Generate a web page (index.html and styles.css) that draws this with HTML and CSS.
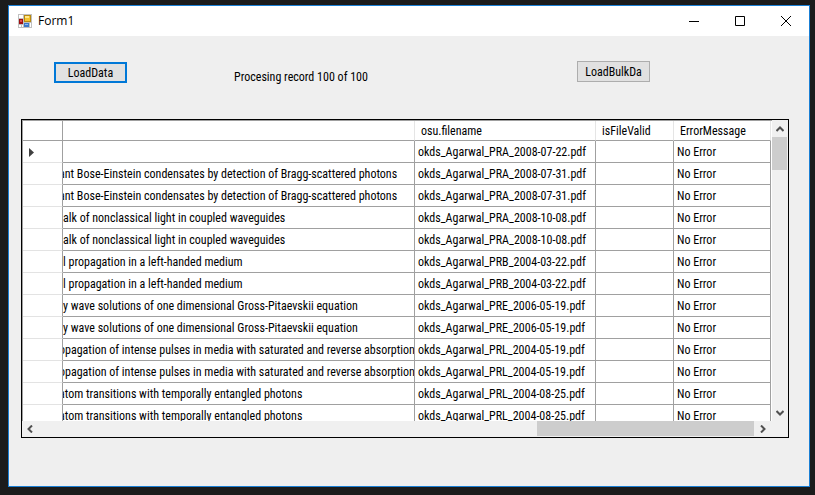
FILE: index.html
```
<!DOCTYPE html>
<html lang="en">
<head>
<meta charset="utf-8">
<title>Form1</title>
<link rel="stylesheet" href="styles.css">
</head>
<body>
<main class="window">
  <header class="titlebar">
    <svg class="app-icon" width="14" height="14" viewBox="0 0 14 14" shape-rendering="crispEdges" aria-hidden="true">
      <path fill="#c0c0c0" d="M0 0h14v14H0z"/>
      <path fill="#fff" d="M1 1h4v3H1zM1 11h2v2H1zM4 11h1v2H4zM12 9h1v4h-1zM1 5h4v5H1z"/>
      <path fill="#a01010" d="M1 5h4v5H1z"/><path fill="#e04848" d="M2 6h2v2H2z"/>
      <path fill="#b88a10" d="M6 1h7v7H6z"/><path fill="#f4c430" d="M7 2h5v5H7z"/><path fill="#ffe88a" d="M7 2h4v2H7z"/>
      <path fill="#3c78c8" d="M6 9h5v4H6z"/><path fill="#8cb8f0" d="M7 10h3v1H7z"/>
    </svg>
    <h1 class="title">Form1</h1>
    <div class="controls">
      <button class="control" aria-label="Minimize"><svg width="10" height="10" viewBox="0 0 10 10"><path d="M0 5.5h10"/></svg></button>
      <button class="control" aria-label="Maximize"><svg width="10" height="10" viewBox="0 0 10 10"><path d="M.5.5h9v9h-9z"/></svg></button>
      <button class="control" aria-label="Close"><svg width="10" height="10" viewBox="0 0 10 10"><path d="M0 0l10 10M10 0L0 10"/></svg></button>
    </div>
  </header>
  <div class="toolbar">
    <button class="btn focused">LoadData</button>
    <output class="status">Procesing record 100 of 100</output>
    <button class="btn bulk">LoadBulkDa</button>
  </div>
  <section class="grid">
    <div class="viewport">
      <table>
        <colgroup><col class="c-head"><col><col class="c-file"><col class="c-valid"><col class="c-error"></colgroup>
        <thead><tr><th></th><th></th><th>osu.filename</th><th>isFileValid</th><th>ErrorMessage</th></tr></thead>
        <tbody>
          <tr><th><svg class="marker" width="5" height="9" viewBox="0 0 5 9"><path d="M0 0l5 4.500-5 4.500z"/></svg></th><td></td><td>okds_Agarwal_PRA_2008-07-22.pdf</td><td></td><td>No Error</td></tr>
          <tr><th></th><td class="cut">ant Bose-Einstein condensates by detection of Bragg-scattered photons</td><td>okds_Agarwal_PRA_2008-07-31.pdf</td><td></td><td>No Error</td></tr>
          <tr><th></th><td class="cut">ant Bose-Einstein condensates by detection of Bragg-scattered photons</td><td>okds_Agarwal_PRA_2008-07-31.pdf</td><td></td><td>No Error</td></tr>
          <tr><th></th><td>alk of nonclassical light in coupled waveguides</td><td>okds_Agarwal_PRA_2008-10-08.pdf</td><td></td><td>No Error</td></tr>
          <tr><th></th><td>alk of nonclassical light in coupled waveguides</td><td>okds_Agarwal_PRA_2008-10-08.pdf</td><td></td><td>No Error</td></tr>
          <tr><th></th><td>l propagation in a left-handed medium</td><td>okds_Agarwal_PRB_2004-03-22.pdf</td><td></td><td>No Error</td></tr>
          <tr><th></th><td>l propagation in a left-handed medium</td><td>okds_Agarwal_PRB_2004-03-22.pdf</td><td></td><td>No Error</td></tr>
          <tr><th></th><td>y wave solutions of one dimensional Gross-Pitaevskii equation</td><td>okds_Agarwal_PRE_2006-05-19.pdf</td><td></td><td>No Error</td></tr>
          <tr><th></th><td>y wave solutions of one dimensional Gross-Pitaevskii equation</td><td>okds_Agarwal_PRE_2006-05-19.pdf</td><td></td><td>No Error</td></tr>
          <tr><th></th><td class="cut">opagation of intense pulses in media with saturated and reverse absorption</td><td>okds_Agarwal_PRL_2004-05-19.pdf</td><td></td><td>No Error</td></tr>
          <tr><th></th><td class="cut">opagation of intense pulses in media with saturated and reverse absorption</td><td>okds_Agarwal_PRL_2004-05-19.pdf</td><td></td><td>No Error</td></tr>
          <tr><th></th><td class="cut">atom transitions with temporally entangled photons</td><td>okds_Agarwal_PRL_2004-08-25.pdf</td><td></td><td>No Error</td></tr>
          <tr><th></th><td class="cut">atom transitions with temporally entangled photons</td><td>okds_Agarwal_PRL_2004-08-25.pdf</td><td></td><td>No Error</td></tr>
        </tbody>
      </table>
    </div>
    <div class="scroll vertical">
      <button class="arrow" aria-label="Scroll up"><svg width="8" height="6" viewBox="0 0 8 6"><path d="M.5 5L4 1.500 7.500 5"/></svg></button>
      <div class="track"><div class="thumb"></div></div>
      <button class="arrow" aria-label="Scroll down"><svg width="8" height="6" viewBox="0 0 8 6"><path d="M.5 1L4 4.500 7.500 1"/></svg></button>
    </div>
    <div class="scroll horizontal">
      <button class="arrow" aria-label="Scroll left"><svg width="6" height="8" viewBox="0 0 6 8"><path d="M5 .5L1.500 4 5 7.500"/></svg></button>
      <div class="track"><div class="thumb"></div></div>
      <button class="arrow" aria-label="Scroll right"><svg width="6" height="8" viewBox="0 0 6 8"><path d="M1 .5L4.500 4 1 7.500"/></svg></button>
    </div>
  </section>
</main>
</body>
</html>
```
FILE: styles.css
```
* { box-sizing: border-box; }
body {
  margin: 0;
  height: 100vh;
  padding: 5px 5px 8px 8px;
  display: flex;
  background: #1b1b1b;
  color: #000;
  font: 12px/14px "Roboto Condensed", "DejaVu Sans Condensed", sans-serif;
}
button { font: inherit; color: inherit; padding: 0; border: 0; background: none; }
.window {
  flex: 1;
  min-width: 0;
  display: flex;
  flex-direction: column;
  border: 1px solid #1a7fd4;
  background: #efefef;
}
.titlebar {
  height: 30px;
  flex: none;
  display: flex;
  align-items: center;
  padding-left: 9px;
  background: #fff;
}
.title { margin: 0 0 0 6px; font-size: 12px; font-weight: 400; font-family: "Open Sans", sans-serif; }
.controls { margin-left: auto; display: flex; height: 100%; }
.control { width: 46px; display: flex; align-items: center; justify-content: center; }
.control svg { fill: none; stroke: #000; }
.toolbar { height: 83px; flex: none; display: flex; align-items: flex-start; padding: 25px 159px 0 45px; }
.btn { width: 73px; height: 21px; background: #e1e1e1; border: 1px solid #adadad; }
.focused { margin-top: 1px; border: 2px solid #0078d7; }
.status { margin: 9px auto 0 107px; }
.grid {
  flex: 1;
  min-height: 0;
  margin: 0 20px 48px 12px;
  display: grid;
  grid-template-columns: minmax(0, 1fr) 16px;
  grid-template-rows: minmax(0, 1fr) 16px;
  border: 1px solid #000;
}
.viewport { overflow: hidden; background: #fff; border-top: 1px solid #a0a0a0; border-left: 1px solid #a0a0a0; padding-right: 1px; }
table { width: 100%; table-layout: fixed; border-collapse: separate; border-spacing: 0; }
.c-head { width: 40px; }
.c-file { width: 181px; }
.c-valid { width: 78px; }
.c-error { width: 97px; }
th, td {
  height: 22px;
  padding: 1px 0 0 3px;
  text-align: left;
  font-weight: 400;
  white-space: nowrap;
  overflow: hidden;
  border-right: 1px solid #a0a0a0;
  border-bottom: 1px solid #a0a0a0;
}
td:nth-child(2) { padding-left: 0; }
.cut { text-indent: -4px; }
thead th { height: 20px; padding-left: 6px; border-right-color: #e5e5e5; }
thead th:first-child { border-right-color: #a0a0a0; }
tbody th { padding-left: 6px; border-bottom-color: #e3e3e3; }
.marker { display: block; fill: #404040; }
.scroll { display: flex; background: #f0f0f0; }
.vertical { flex-direction: column; padding-top: 1px; }
.horizontal { grid-column: 1 / 3; padding-right: 17px; }
.arrow { width: 16px; height: 16px; flex: none; display: flex; align-items: center; justify-content: center; }
.arrow svg { fill: none; stroke: #505050; stroke-width: 2; }
.track { flex: 1; display: flex; }
.thumb { background: #cdcdcd; }
.vertical .thumb { width: 15px; height: 33px; }
.horizontal .thumb { width: 217px; height: 15px; margin: 0 1px 0 auto; }
```
